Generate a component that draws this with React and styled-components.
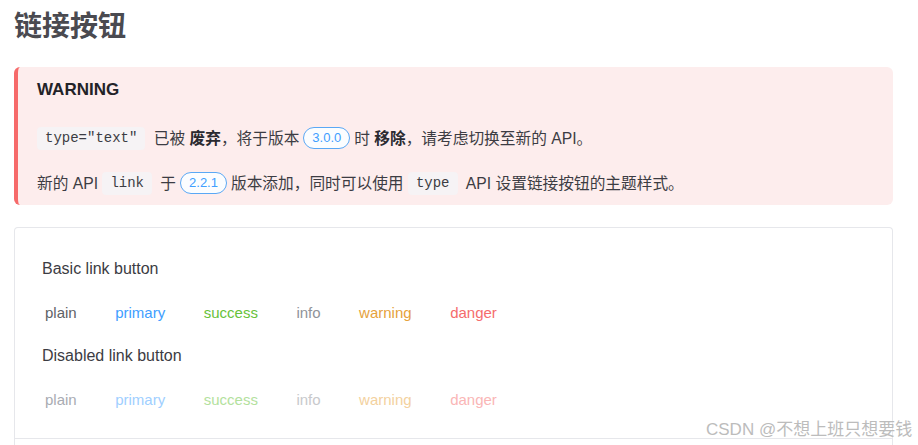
import React from "react";
import styled, { createGlobalStyle } from "styled-components";

const GlobalStyle = createGlobalStyle`
  html, body {
    margin: 0;
    padding: 0;
    background: #fff;
    overflow: hidden;
  }
  body {
    font-family: "Liberation Sans", Arial, "Noto Sans CJK SC", sans-serif;
    color: #3c3c43;
  }
`;

const Page = styled.div`
  position: relative;
  width: 879px;
  padding: 6px 0 0 14px;
`;

const Title = styled.h1`
  margin: 0;
  font-size: 28px;
  line-height: 36px;
  font-weight: 700;
  color: #4a4a50;
  font-family: "Noto Sans CJK SC", sans-serif;
`;

const Warning = styled.div`
  margin-top: 25px;
  background: #fdeded;
  border-left: 4px solid #f66a6a;
  border-radius: 6px;
  padding: 12px 20px 10px 19px;
`;

const WarningTitle = styled.div`
  font-size: 17px;
  font-weight: 700;
  line-height: 22px;
  color: #232328;
`;

const Para = styled.p`
  margin: ${(p) => (p.first ? "26px" : "22px")} 0 0;
  font-size: 15.7px;
  line-height: 23px;
  color: #3c3c43;
  font-family: "Liberation Sans", Arial, "Noto Sans CJK SC", sans-serif;

  strong {
    font-weight: 700;
    color: #2a2a30;
  }
`;

const Code = styled.code`
  display: inline-block;
  vertical-align: middle;
  font-family: "Liberation Mono", "DejaVu Sans Mono", monospace;
  font-size: 14px;
  line-height: 17px;
  padding: 3px 8px;
  margin: -3px 4px 0 0;
  border-radius: 4px;
  background: #f6f3f5;
  color: #3c3c43;
`;

const Badge = styled.span`
  display: inline-block;
  vertical-align: middle;
  font-size: 13px;
  line-height: 18px;
  padding: 1px 8px;
  margin: -3px 4px 0;
  border: 1px solid #5aa8f5;
  border-radius: 11px;
  background: #fbfdff;
  color: #409eff;
`;

const Demo = styled.div`
  margin-top: 22px;
  border: 1px solid #e6e7eb;
  border-bottom: none;
  border-radius: 4px 4px 0 0;
`;

const DemoBody = styled.div`
  padding: 29px 27px 22px;
  border-bottom: 1px solid #e6e7eb;
`;

const DemoText = styled.p`
  margin: ${(p) => (p.second ? "15px" : "0")} 0 0;
  font-size: 16px;
  line-height: 24px;
  color: #3c3c43;
`;

const Row = styled.div`
  display: flex;
  align-items: center;
  gap: 34.5px;
  height: 32px;
  margin-top: 16px;
`;

const colors = {
  plain: ["#606266", "#a8abb2"],
  primary: ["#409eff", "#a0cfff"],
  success: ["#67c23a", "#b3e19d"],
  info: ["#909399", "#c8c9cc"],
  warning: ["#e6a23c", "#f3d19e"],
  danger: ["#f56c6c", "#fab6b6"],
};

const LinkButton = styled.button`
  border: none;
  background: none;
  padding: 2px 2px;
  font-family: "Liberation Sans", Arial, sans-serif;
  font-size: 15px;
  line-height: 20px;
  color: ${(p) => colors[p.kind][p.disabled ? 1 : 0]};
  cursor: ${(p) => (p.disabled ? "not-allowed" : "pointer")};
  &:first-child {
    margin-left: 1px;
  }
`;

const SourceBar = styled.div`
  height: 40px;
`;

const Watermark = styled.div`
  position: absolute;
  left: 706px;
  top: 419px;
  font-size: 17px;
  line-height: 22px;
  white-space: nowrap;
  color: #bcbcbc;
  font-family: "Liberation Sans", Arial, "Noto Sans CJK SC", sans-serif;
  text-shadow: 0 0 1px #fff;
`;

const kinds = ["plain", "primary", "success", "info", "warning", "danger"];

export default function App() {
  return (
    <>
      <GlobalStyle />
      <Page>
        <Title>链接按钮</Title>
        <Warning>
          <WarningTitle>WARNING</WarningTitle>
          <Para first>
            <Code>type="text"</Code> 已被 <strong>废弃</strong>，将于版本
            <Badge>3.0.0</Badge>时 <strong>移除</strong>，请考虑切换至新的 API。
          </Para>
          <Para>
            新的 API <Code>link</Code> 于<Badge>2.2.1</Badge>版本添加，同时可以使用{" "}
            <Code>type</Code> API 设置链接按钮的主题样式。
          </Para>
        </Warning>
        <Demo>
          <DemoBody>
            <DemoText>Basic link button</DemoText>
            <Row>
              {kinds.map((k) => (
                <LinkButton key={k} kind={k}>
                  {k}
                </LinkButton>
              ))}
            </Row>
            <DemoText second>Disabled link button</DemoText>
            <Row>
              {kinds.map((k) => (
                <LinkButton key={k} kind={k} disabled>
                  {k}
                </LinkButton>
              ))}
            </Row>
          </DemoBody>
          <SourceBar />
        </Demo>
        <Watermark>CSDN @不想上班只想要钱</Watermark>
      </Page>
    </>
  );
}
